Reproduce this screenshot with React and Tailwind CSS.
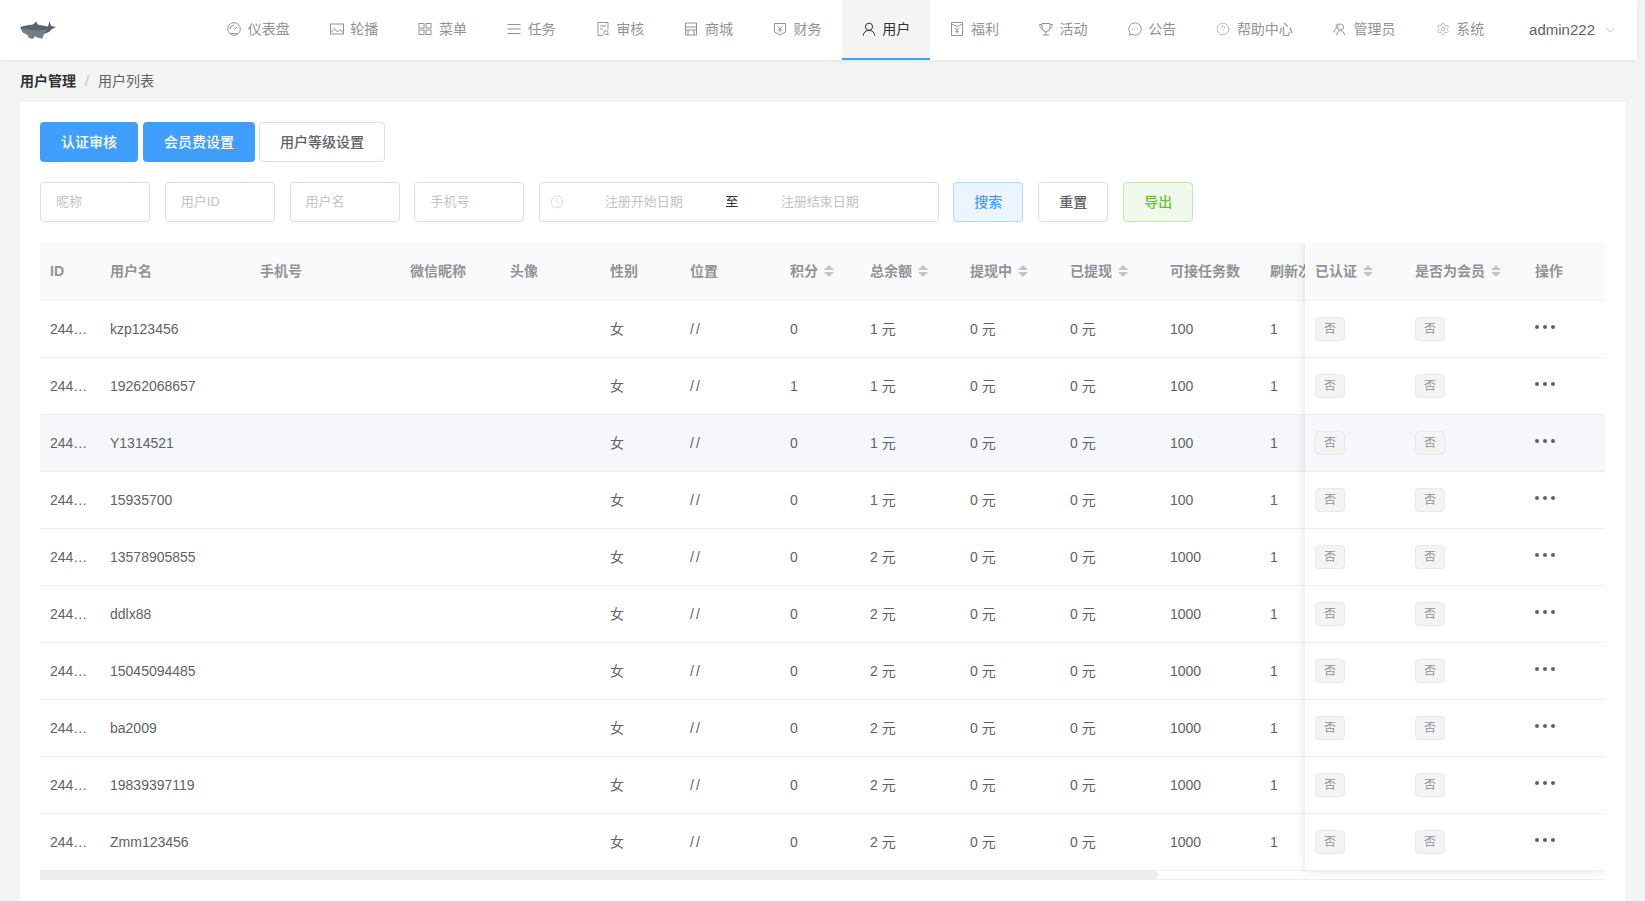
import { ChevronDown, CircleHelp, Clock, Settings } from "lucide-react";

const Svg = ({ children }) => (
  <svg viewBox="0 0 14 14" fill="none" stroke="currentColor" strokeWidth="1" className="size-[14px]">
    {children}
  </svg>
);

const navItems = [
  {
    label: "仪表盘",
    icon: (
      <Svg>
        <circle cx="7" cy="7" r="6.3" />
        <path d="M7 8.2 10 4.6M3 7.2a4 4 0 0 1 4-4M3.5 11.6h7" />
      </Svg>
    ),
  },
  {
    label: "轮播",
    icon: (
      <Svg>
        <rect x="0.5" y="2" width="13" height="10" />
        <path d="M1 10.5 4.5 6.5 7.5 10 10 7.5l3.5 3.5" />
      </Svg>
    ),
  },
  {
    label: "菜单",
    icon: (
      <Svg>
        <rect x="1" y="1.5" width="5" height="4.5" />
        <rect x="8" y="1.5" width="5" height="4.5" />
        <rect x="1" y="8" width="5" height="4.5" />
        <rect x="8" y="8" width="5" height="4.5" />
      </Svg>
    ),
  },
  {
    label: "任务",
    icon: (
      <Svg>
        <path d="M.5 2.5h13M.5 7h13M.5 11.5h13" />
      </Svg>
    ),
  },
  {
    label: "审核",
    icon: (
      <Svg>
        <path d="M7 13.5H2V.5h10v7M4 4h6M4 7h3" />
        <circle cx="10" cy="10.5" r="2" />
        <path d="m11.5 12 1.5 1.5" />
      </Svg>
    ),
  },
  {
    label: "商城",
    icon: (
      <Svg>
        <path d="M1.5 1h11v12h-11zM1.5 5h11M4 13V8h6v5M1.5 8H4M10 8h2.5" />
      </Svg>
    ),
  },
  {
    label: "财务",
    icon: (
      <Svg>
        <path d="M1.5 1.5h11v8.5L7 13 1.5 10zM5 4.5 7 7l2-2.5M7 7v3.5M5.2 8h3.6" />
      </Svg>
    ),
  },
  {
    label: "用户",
    active: true,
    icon: (
      <Svg>
        <circle cx="7" cy="4.8" r="3.6" />
        <path d="M1.2 13.6c.3-3.2 2.6-5.2 5.8-5.2s5.5 2 5.8 5.2" />
      </Svg>
    ),
  },
  {
    label: "福利",
    icon: (
      <Svg>
        <path d="M1.5.5h11v13h-11zM1.5 2 7 4.5 12.5 2M5 6l2 2.2L9 6M7 8.2v3M5.2 9.3h3.6" />
      </Svg>
    ),
  },
  {
    label: "活动",
    icon: (
      <Svg>
        <path d="M3 1.5h8v4a4 4 0 0 1-8 0zM3 2.5H.7c0 2.5 1 4 2.7 4.4M11 2.5h2.3c0 2.5-1 4-2.7 4.4M7 9.5v3.5M4 13h6" />
      </Svg>
    ),
  },
  {
    label: "公告",
    icon: (
      <Svg>
        <path d="M7 .8a6.2 6.2 0 1 1-3 11.6l-2.6.9.7-2.5A6.2 6.2 0 0 1 7 .8z" />
        <path d="M4 7h.8M6.6 7h.8M9.2 7h.8" />
      </Svg>
    ),
  },
  {
    label: "帮助中心",
    icon: <CircleHelp className="size-[14px]" strokeWidth={1} />,
  },
  {
    label: "管理员",
    icon: (
      <Svg>
        <circle cx="7.5" cy="5" r="3" />
        <path d="M3.6 13.2c.3-2.8 1.8-4.6 3.9-4.6s3.6 1.8 4.1 4.6M5.5 1.6C3.6 2.2 2.8 4 3.4 6c-1 .9-2.2 2.5-2.6 4.4" />
      </Svg>
    ),
  },
  {
    label: "系统",
    icon: <Settings className="size-[14px]" strokeWidth={1} />,
  },
];

// username, score, balance, tasks
const rows = [
  ["kzp123456", 0, 1, 100],
  ["19262068657", 1, 1, 100],
  ["Y1314521", 0, 1, 100],
  ["15935700", 0, 1, 100],
  ["13578905855", 0, 2, 1000],
  ["ddlx88", 0, 2, 1000],
  ["15045094485", 0, 2, 1000],
  ["ba2009", 0, 2, 1000],
  ["19839397119", 0, 2, 1000],
  ["Zmm123456", 0, 2, 1000],
];

const Logo = () => (
  <svg viewBox="0 0 36 18" className="w-9 h-[18px]">
    <path
      d="M0 6 6 4.5 13 3.5 16.500 .5 17.500 3.500 25 5 28 5.500 29.500 .200 31 5 36 6 31.500 8.500 29 11 24 13 22 17.500 18 16.500 15 15 13 17.500 9 17 8 14 3 11.500z"
      fill="#56646f"
    />
    <path d="M1 8 8 8.500 18 9.500 27 8.500 24 13 22 17.500 18 16.500 15 15 13 17.500 9 17 8 14 3 11.500z" fill="#707e8a" />
  </svg>
);

const Caret = () => (
  <span className="ml-[6px] inline-flex flex-col gap-[2px]">
    <span className="w-0 h-0 border-x-[5px] border-x-transparent border-b-[5px] border-b-[#c0c4cc]" />
    <span className="w-0 h-0 border-x-[5px] border-x-transparent border-t-[5px] border-t-[#c0c4cc]" />
  </span>
);

const Tag = () => (
  <span className="flex items-center justify-center w-[30px] h-6 rounded border border-[#e9e9eb] bg-[#f4f4f5] text-xs text-[#909399]">
    否
  </span>
);

const More = () => (
  <svg viewBox="0 0 20 4" className="w-5 h-1 -mt-1 fill-[#606266]">
    <circle cx="2" cy="2" r="2" />
    <circle cx="10" cy="2" r="2" />
    <circle cx="18" cy="2" r="2" />
  </svg>
);

const Cell = ({ className, children }) => (
  <div className={`flex flex-none items-center px-[10px] ${className}`}>{children}</div>
);

const headClass = "h-[59px] flex border-b border-[#ebeef5] bg-[#fafafa] font-bold text-[#909399]";

const Row = ({ index, children }) => (
  <div className={`h-[57px] flex border-b border-[#ebeef5] ${index === 2 ? "bg-[#f5f7fa]" : "bg-white"}`}>
    {children}
  </div>
);

const App = () => {
  return (
    <div
      className="h-screen overflow-hidden bg-[#f3f5f5] text-sm text-[#606266]"
      style={{ fontFamily: '"Liberation Sans", "Noto Sans CJK SC", sans-serif' }}
    >
      <header className="relative z-20 mr-2 h-[60px] flex items-center bg-white shadow-[0_1px_4px_rgba(0,0,0,0.08)]">
        <div className="w-[207px] pl-5 flex-none">
          <Logo />
        </div>
        <nav className="flex h-full">
          {navItems.map((item) => (
            <div
              key={item.label}
              className={`flex items-center px-5 h-full border-b-2 ${
                item.active
                  ? "bg-[#f3f5f5] border-[#409eff] text-[#303133]"
                  : "border-transparent text-[#909399]"
              }`}
            >
              <span className="mr-[6.67px] flex-none">{item.icon}</span>
              <span>{item.label}</span>
            </div>
          ))}
        </nav>
        <div className="ml-auto pr-5 flex items-center gap-2 text-[15px] text-[#606266]">
          admin222
          <ChevronDown className="size-[14px] text-[#909399]" strokeWidth={1} />
        </div>
      </header>

      <div className="h-[42px] px-5 flex items-center">
        <span className="font-bold text-[#303133]">用户管理</span>
        <span className="mx-[9px] text-[#c0c4cc]">/</span>
        <span>用户列表</span>
      </div>

      <main className="mx-5 h-[800px] bg-white px-5 pt-5">
        <div className="flex h-10">
          <button className="w-[98px] rounded bg-[#409eff] font-medium text-white">认证审核</button>
          <button className="ml-[5px] w-28 rounded bg-[#409eff] font-medium text-white">会员费设置</button>
          <button className="ml-1 w-[126px] rounded border border-[#dcdfe6] bg-white font-medium">
            用户等级设置
          </button>
        </div>

        <div className="mt-5 flex h-10">
          <div className="flex gap-[14.8px]">
            {["昵称", "用户ID", "用户名", "手机号"].map((p) => (
              <input
                key={p}
                placeholder={p}
                className="w-[110px] rounded border border-[#dcdfe6] px-[15px] text-[13px] placeholder:text-[#c0c4cc] outline-none"
              />
            ))}
          </div>
          <div className="ml-[14.8px] w-[400px] flex items-center rounded border border-[#dcdfe6] pl-[10px] text-[13px] text-[#c0c4cc]">
            <Clock className="size-[14px] flex-none" strokeWidth={1} />
            <span className="w-[159px] text-center">注册开始日期</span>
            <span className="mx-[2px] text-[#303133]">至</span>
            <span className="w-[159px] text-center">注册结束日期</span>
          </div>
          <button className="ml-[14px] w-[70px] rounded border border-[#b3d8ff] bg-[#ecf5ff] font-medium text-[#409eff]">
            搜索
          </button>
          <button className="ml-[15px] w-[70px] rounded border border-[#dcdfe6] bg-white font-medium">重置</button>
          <button className="ml-[15px] w-[70px] rounded border border-[#c2e7b0] bg-[#f0f9eb] font-medium text-[#67c23a]">
            导出
          </button>
        </div>

        <div className="mt-5 overflow-hidden border-b border-[#ebeef5]">
          <div className="flex">
            <div className="min-w-0 flex-1 overflow-hidden">
              <div className="w-max">
                <div className={headClass}>
                  <Cell className="w-[60px]">ID</Cell>
                  <Cell className="w-[150px]">用户名</Cell>
                  <Cell className="w-[150px]">手机号</Cell>
                  <Cell className="w-[100px]">微信昵称</Cell>
                  <Cell className="w-[100px]">头像</Cell>
                  <Cell className="w-[80px]">性别</Cell>
                  <Cell className="w-[100px]">位置</Cell>
                  <Cell className="w-[80px]">积分<Caret /></Cell>
                  <Cell className="w-[100px]">总余额<Caret /></Cell>
                  <Cell className="w-[100px]">提现中<Caret /></Cell>
                  <Cell className="w-[100px]">已提现<Caret /></Cell>
                  <Cell className="w-[100px]">可接任务数</Cell>
                  <Cell className="w-[100px] whitespace-nowrap">刷新次数</Cell>
                </div>
                {rows.map(([name, score, balance, tasks], i) => (
                  <Row key={name} index={i}>
                    <Cell className="w-[60px]">244…</Cell>
                    <Cell className="w-[150px]">{name}</Cell>
                    <Cell className="w-[150px]" />
                    <Cell className="w-[100px]" />
                    <Cell className="w-[100px]" />
                    <Cell className="w-[80px]">女</Cell>
                    <Cell className="w-[100px] tracking-[2px]">//</Cell>
                    <Cell className="w-[80px]">{score}</Cell>
                    <Cell className="w-[100px]">{balance} 元</Cell>
                    <Cell className="w-[100px]">0 元</Cell>
                    <Cell className="w-[100px]">0 元</Cell>
                    <Cell className="w-[100px]">{tasks}</Cell>
                    <Cell className="w-[100px]">1</Cell>
                  </Row>
                ))}
              </div>
            </div>

            {/* fixed columns */}
            <div className="relative z-10 w-[300px] flex-none shadow-[0_0_10px_rgba(0,0,0,0.12)]">
              <div className={headClass}>
                <Cell className="w-[100px]">已认证<Caret /></Cell>
                <Cell className="w-[120px]">是否为会员<Caret /></Cell>
                <Cell className="w-[80px]">操作</Cell>
              </div>
              {rows.map(([name], i) => (
                <Row key={name} index={i}>
                  <Cell className="w-[100px]"><Tag /></Cell>
                  <Cell className="w-[120px]"><Tag /></Cell>
                  <Cell className="w-[80px]"><More /></Cell>
                </Row>
              ))}
            </div>
          </div>
          <div className="h-2 bg-white">
            <div className="h-full w-[1118px] rounded-r bg-[#ededed]" />
          </div>
        </div>
      </main>
    </div>
  );
};

export default App;
